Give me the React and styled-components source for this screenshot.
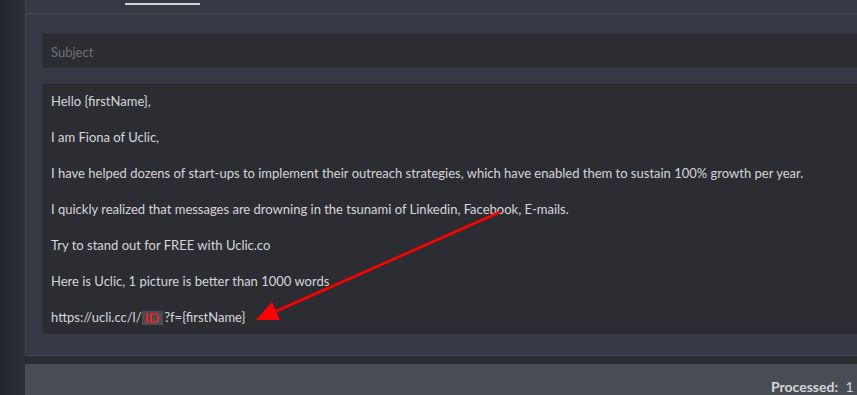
import React from 'react';
import styled, { createGlobalStyle } from 'styled-components';

const GlobalStyle = createGlobalStyle`
  html, body {
    margin: 0;
    padding: 0;
    background: #2a2c32;
    overflow: hidden;
    height: 100%;
  }
  #root {
    height: 100%;
  }
`;

const lines = [
  'Hello {firstName},',
  'I am Fiona of Uclic,',
  'I have helped dozens of start-ups to implement their outreach strategies, which have enabled them to sustain 100% growth per year.',
  'I quickly realized that messages are drowning in the tsunami of Linkedin, Facebook, E-mails.',
  'Try to stand out for FREE with Uclic.co',
  'Here is Uclic, 1 picture is better than 1000 words',
];

const App = () => (
  <>
    <GlobalStyle />
    <Page>
      <SideStrip />
      <Main>
        <Editor>
          <TabBar>
            <Tab $active />
          </TabBar>
          <Form>
            <SubjectField>Subject</SubjectField>
            <BodyField>
              {lines.map((l) => (
                <Line key={l}>{l}</Line>
              ))}
              <Line>
                https://ucli.cc/l/<IdTag>ID</IdTag>?f=&#123;firstName&#125;
              </Line>
            </BodyField>
          </Form>
        </Editor>
        <Footer>
          <Stat>
            Processed: <b>1</b>
          </Stat>
        </Footer>
      </Main>
      <Arrow width="857" height="395" viewBox="0 0 857 395">
        <line x1="500" y1="212" x2="272" y2="313" stroke="#ff0000" strokeWidth="2.6" />
        <polygon points="256,320 272,302 280,320" fill="#ff0000" />
      </Arrow>
    </Page>
  </>
);

export default App;

const Page = styled.div`
  position: relative;
  display: flex;
  height: 100%;
  width: 100%;
  font-family: Lato, 'Noto Sans', sans-serif;
`;

const SideStrip = styled.div`
  width: 25px;
  flex: none;
  background: linear-gradient(to right, #24262c, #2c2f36);
`;

const Main = styled.div`
  flex: none;
  width: 880px;
  display: flex;
  flex-direction: column;
  gap: 8px;
`;

const Editor = styled.div`
  background: #363943;
  border-left: 1px solid #41444d;
  border-bottom: 1px solid #464952;
  height: 357px;
  box-sizing: border-box;
`;

const TabBar = styled.div`
  height: 14px;
  box-sizing: border-box;
  padding: 3px 0 0 99px;
  border-bottom: 1px solid #464952;
`;

const Tab = styled.div`
  width: 75px;
  height: 2px;
  background: ${(p) => (p.$active ? '#d0d2d6' : 'transparent')};
`;

const Form = styled.div`
  display: flex;
  flex-direction: column;
  gap: 15px;
  padding: 20px 0 0 15px;
`;

const FieldBox = styled.div`
  background: #2c2d33;
  border: 1px solid #3a3c44;
  border-top-color: #26272c;
  border-radius: 3px;
  box-sizing: border-box;
`;

const SubjectField = styled(FieldBox)`
  height: 35px;
  display: flex;
  align-items: center;
  padding-left: 9px;
  font-size: 13px;
  color: #6f7177;
`;

const BodyField = styled(FieldBox)`
  height: 251px;
  padding: 6px 0 0 9px;
  display: flex;
  flex-direction: column;
  gap: 16px;
`;

const Line = styled.div`
  font-size: 13px;
  line-height: 20px;
  color: #d6d6d8;
  white-space: nowrap;
`;

const IdTag = styled.span`
  display: inline-block;
  background: #4a4c53;
  color: #ff1a1a;
  font-weight: 600;
  font-size: 14px;
  line-height: 14px;
  padding: 0 4px 0 3px;
  margin-right: 1px;
  vertical-align: -1px;
`;

const Footer = styled.div`
  flex: 1;
  background: #4a4c54;
  display: flex;
  justify-content: flex-start;
  padding-left: 746px;
`;

const Stat = styled.div`
  margin-top: 14px;
  font-size: 14px;
  font-weight: 700;
  color: #d4d5d8;
  white-space: nowrap;
  b {
    font-weight: 400;
    margin-left: 4px;
  }
`;

const Arrow = styled.svg`
  position: absolute;
  left: 0;
  top: 0;
  pointer-events: none;
`;
